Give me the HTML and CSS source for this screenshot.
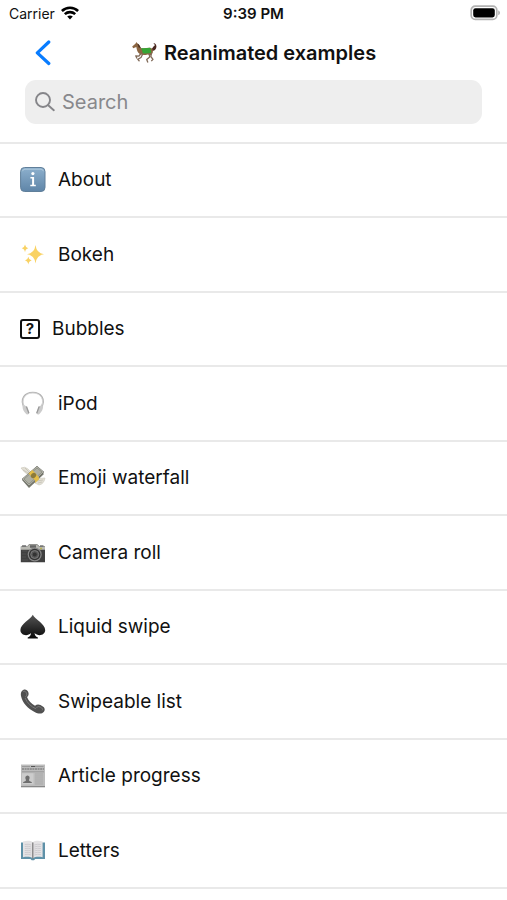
FILE: index.html
```html
<!DOCTYPE html>
<html lang="en">
<head>
<meta charset="utf-8">
<meta name="viewport" content="width=device-width, initial-scale=1">
<title>Reanimated examples</title>
<link rel="stylesheet" href="styles.css">
</head>
<body>
<div class="status">
  <div class="status-carrier">
    <span>Carrier</span>
    <svg width="18" height="14" viewBox="0 0 18 14" aria-hidden="true" fill="none" stroke="#000" stroke-width="2.6"><path d="M.9 5C5.4.7 12.600.7 17.100 5"/><path d="M3.800 8.100c3-2.700 7.400-2.700 10.400 0"/><path d="M6.200 10.500c1.700-1.500 3.900-1.500 5.600 0L9 13.400z" fill="#000" stroke="none"/></svg>
  </div>
  <span class="status-time">9:39 PM</span>
  <svg class="battery" width="32" height="16" viewBox="0 0 32 16" aria-hidden="true"><rect x="2.200" y="1.200" width="25.600" height="13.200" rx="4" fill="#fff" stroke="#b2b2b2" stroke-width="1.700"/><rect x="4.200" y="3.200" width="21.600" height="9.200" rx="2.300"/><path d="M29.200 5.500c2.400.7 2.400 4 0 4.700z" fill="#b2b2b2"/></svg>
</div>
<header class="header">
  <button class="back" type="button" aria-label="Back">
    <svg width="18" height="28" viewBox="0 0 18 28" fill="none" stroke="#087cff" stroke-width="3.200" stroke-linecap="round" stroke-linejoin="round"><path d="M15.800 3 4.300 13.800l11.500 10.700"/></svg>
  </button>
  <h1 class="title">
    <svg width="27" height="24" viewBox="0 0 27 24" aria-hidden="true">
      <path d="M20 8c2-.4 1.600-2.600 3.600-3.300.5-1.100-.6-1.700-1.200-2.700 2.500.4 3.600 2.400 2.800 5-.7 2.400-2.700 3.300-5 3z" fill="#4a2720"/>
      <path d="M1.200 5.600 4.400 2.700 5.500 1l.8 1.600c1.800.9 2.300 3 3.400 4.400 3.600.8 6.500-.5 10-.1 2.200.6 2.600 2.700 2 5l-2 2.300-3-.8c-2.800.8-5.500.7-7.500-.2C6.600 12.300 6 9.500 5.300 6.100L2.200 7.200z" fill="#8b6642"/>
      <path d="M6.300 2.200c2 1 2.700 3 3.700 4.700L7.600 6.400z" fill="#4c3021"/>
      <g fill="none" stroke="#806a58" stroke-width="1.300" stroke-linejoin="round"><path d="m10.500 12-2.800 3.200-3-.4L6 17.500"/><path d="m12 12.500-2 4-3.200 1.900 1.700 1.800"/><path d="m18 12 .7 4-3 2.500 1.200 3"/><path d="m20.500 12-.7 3.500 2.200 2.800-1.700 1.800"/></g>
      <path d="M10.300 6.900c3.200.7 5.900.1 9-.1l1 5c-3 .8-6 .9-8.500.5z" fill="#35a536"/>
    </svg>
    <span>Reanimated examples</span>
  </h1>
</header>
<form class="search" role="search">
  <label class="search-box">
    <svg width="20" height="20" viewBox="0 0 20 20" aria-hidden="true" fill="none" stroke="#858589" stroke-width="1.900" stroke-linecap="round"><circle cx="8" cy="8" r="7"/><path d="m13.200 13.200 5.600 5"/></svg>
    <input class="search-input" type="search" placeholder="Search" aria-label="Search">
  </label>
</form>
<main>
<ul class="list">
  <li><a class="row" href="#about">
    <svg class="icon" viewBox="0 0 26 26" aria-hidden="true"><defs><linearGradient id="info" x2="0" y2="1"><stop stop-color="#8db0cd"/><stop offset="1" stop-color="#5f85a8"/></linearGradient></defs><rect x=".6" y=".5" width="24.400" height="24" rx="4" fill="url(#info)" stroke="#607f9a" stroke-width="1"/><path d="M2.500 4.200q.5-2 2.500-2h16q2 0 2.300 2" fill="none" stroke="#afcadd"/><circle cx="12.900" cy="6.600" r="1.600" fill="#fff"/><path d="M10.400 10.100h3.700v7.700h1.700v1.500h-5.500v-1.500h1.800v-6.200h-1.700z" fill="#fff"/></svg>
    <span>About</span></a></li>
  <li><a class="row" href="#bokeh">
    <svg class="icon" viewBox="0 0 26 26" aria-hidden="true" fill="#f9d263"><path d="M15.500 3q1 8.200 8.500 9.300-7.500 1-8.500 9.200-1-8.200-8.500-9.200Q14.500 11.200 15.500 3z"/><path d="M5 2.500q.5 3.200 3.300 3.800Q5.500 6.900 5 10.300 4.500 6.900 1.700 6.300 4.500 5.700 5 2.500zM8.300 14.700q.5 3.200 3.400 3.900-2.900.6-3.400 4-.5-3.400-3.300-4 2.800-.7 3.300-3.900z"/></svg>
    <span>Bokeh</span></a></li>
  <li><a class="row" href="#bubbles">
    <span class="missing" aria-hidden="true">?</span>
    <span>Bubbles</span></a></li>
  <li><a class="row" href="#ipod">
    <svg class="icon" viewBox="0 0 26 26" aria-hidden="true"><path d="M4.300 16.500C-.3 7.500 5 1.500 12.800 1.500s13.100 6 8.500 15" fill="none" stroke="#b2b2b2" stroke-width="1.700"/><path d="M4.300 16.500C.5 8 5.500 2 12.800 2s12.300 6 8.500 14.500" fill="none" stroke="#e2e2e2" stroke-width=".7"/><path d="M2.500 15.300c2-1.700 4-.6 5 1.700l1.600 4.500c.4 1.600-1.500 2.700-2.900 1.500-2.300-2-3.700-4.600-3.700-7.700zM23.100 15.300c-2-1.700-4-.6-5 1.700l-1.600 4.500c-.4 1.600 1.500 2.700 2.900 1.500 2.300-2 3.700-4.600 3.700-7.700z" fill="#ccc"/><path d="m6.400 15.500 2.500 6.700m10.300-6.700-2.500 6.700" stroke="#999" stroke-width="1.300"/></svg>
    <span>iPod</span></a></li>
  <li><a class="row" href="#emoji-waterfall">
    <svg class="icon" viewBox="0 0 26 26" aria-hidden="true"><path d="M10 10Q5 9 1 3q4-2 7 1l3 3zM17 14q4-1 8-1-1 6-6 7l-4-2z" fill="#e2dfd5" stroke="#cbc7bb" stroke-width=".6"/><path d="m3 5 7 4M5 3l5 5m7 8 6-1m-5 3 4-1" stroke="#bbb7a9" stroke-width=".6"/><path d="m2 15 7 8L24 9l-7-7z" fill="#77796e"/><path d="m2 14 7 7L24 7l-7-6z" fill="#aeaf a4"/><path d="m2 14 7 7L24 7l-7-6z" fill="#aeafa4"/><path d="m4 14 5 5L22 7l-5-4z" fill="none" stroke="#85877c" stroke-width=".7"/><path d="m8.500 8.500 6.700 7-.2 2.500 4-3.600-.2-2.400-6.500-7z" fill="#e3bd48"/><ellipse cx="13.500" cy="10.500" rx="2.300" ry="3" transform="rotate(45 13.500 10.500)" fill="#8c7a3b"/></svg>
    <span>Emoji waterfall</span></a></li>
  <li><a class="row" href="#camera-roll">
    <svg class="icon" viewBox="0 0 26 26" aria-hidden="true"><path d="M.8 6.500 4 5.800 7.500 6l1.600-1.800h8l2 1.800H25v16.200H.8z" fill="#404040"/><path d="M1 6.300h6.500l1.800-1.700h7.600l1.900 1.700H25v3.500H1z" fill="#b8b8b2"/><path d="M2 5.300h4v1.800H2zm18-.1h3.500V7H20z" fill="#777"/><path d="M10 5.200h6v2.600h-6z" fill="#666"/><circle cx="14.700" cy="14.500" r="7" fill="#888"/><circle cx="14.700" cy="14.500" r="5.800" fill="#333"/><circle cx="14.700" cy="14.500" r="4" fill="#555" stroke="#888" stroke-width=".8"/><circle cx="14.700" cy="14.500" r="2" fill="#333"/><path d="M2 11h5M2 14h4M2 17h4M2 20h6" stroke="#5c5c5c" stroke-width=".6"/><circle cx="21" cy="8.600" r="1" fill="#b8b04a"/></svg>
    <span>Camera roll</span></a></li>
  <li><a class="row" href="#liquid-swipe">
    <svg class="icon" viewBox="0 0 26 26" aria-hidden="true"><defs><linearGradient id="spade" x2="0" y2="1"><stop stop-color="#555"/><stop offset="1" stop-color="#080808"/></linearGradient></defs><path d="M12.800.8C15 5.200 25.200 10.300 25.200 16c0 5.400-7 6.800-10.600 3.100.2 2.300 1 3.600 3.300 4.300v1.200H7.700v-1.200c2.300-.7 3.100-2 3.300-4.300C7.400 22.800.4 21.400.4 16 .4 10.300 10.600 5.200 12.800.8z" fill="url(#spade)"/></svg>
    <span>Liquid swipe</span></a></li>
  <li><a class="row" href="#swipeable-list">
    <svg class="icon" viewBox="0 0 26 26" aria-hidden="true"><path d="M3.200 1c2-1.200 4.200 0 5 2.100.8 2 .4 3.600-1.200 5 1.500 3.800 4.300 6.600 8 8.700 1.600-1.500 3.400-1.800 5.500-.8l2.700 1.800c1.800 1.300 1.900 3.200.7 4.900-2.100 2.600-5.600 2.200-9.300.3C7.700 19.400 2.500 13.900 1 7 .5 4.400 1.100 2.200 3.200 1z" fill="#505050"/><path d="M5.100 9c2 5 6 8.700 11 10.900" fill="none" stroke="#777"/><path d="M3.200 2.400c1.500-.8 2.900.5 3.400 2.200.4 1.500 0 2.500-1.200 3.200m11.100 11c1-1.400 2.300-1.500 3.800-.7 2 1 2.800 2.200 1.900 3.300" fill="none" stroke="#808080" stroke-width=".9"/></svg>
    <span>Swipeable list</span></a></li>
  <li><a class="row" href="#article-progress">
    <svg class="icon" viewBox="0 0 26 26" aria-hidden="true"><path d="M1 1.500h24V24H1z" fill="#bcbcbc"/><path d="M1 23h24v1.300H1z" fill="#888"/><path d="M2 3.500h8m5 0h8.500M2 8.800h22" stroke="#909090" stroke-width=".8"/><path d="M2 6h22" stroke="#929292" stroke-width="2.200" stroke-dasharray="2 .6"/><path d="M11 3.500h4" stroke="#555"/><path d="M2 10.300h11.500v11H2z" fill="#ccc"/><path d="M3 20c0-2 3-1 3-3-1-2-1-4 1.500-4.500 2.500.5 2.500 2.500 1.500 4.500 0 2 3 1 3 3z" fill="#6e6e6e"/><path d="M15 11h8m-8 2h8m-8 2h8m-8 2h8m-8 2h8m-8 2h8" stroke="#a4a4a4" stroke-width=".8"/></svg>
    <span>Article progress</span></a></li>
  <li><a class="row" href="#letters">
    <svg class="icon" viewBox="0 0 26 26" aria-hidden="true"><path d="M1 4.500h24V21h-9.800L14 22.300h-2.300L10.500 21H1z" fill="#5f91a8"/><path d="M3 3.500c4-1 7.500-1 9.800.8 2.300-1.800 5.800-1.800 9.800-.8v15.700c-4-.8-7.200-.6-9.800 1.100-2.600-1.700-5.800-1.900-9.800-1.100z" fill="#e4e2e4"/><path d="M12.800 4.500v16" stroke="#777" stroke-width="1.200"/><path d="M4.800 6.500q3.500-.7 6.500.5m-6.500 1.500q3.500-.7 6.500.5m-6.500 1.500q3.500-.7 6.500.5m-6.500 1.500q3.500-.7 6.500.5m-6.500 1.500q3.500-.7 6.500.5m-6.500 1.500q3.500-.7 6.500.5m9.500-10.500q-3.500-.7-6.500.5m6.500 1.500q-3.500-.7-6.500.5m6.500 1.500q-3.500-.7-6.500.5m6.500 1.500q-3.500-.7-6.500.5m6.500 1.500q-3.500-.7-6.500.5m6.500 1.500q-3.500-.7-6.500.5" fill="none" stroke="#c2c0c4" stroke-width=".7"/></svg>
    <span>Letters</span></a></li>
</ul>
</main>
</body>
</html>
```
FILE: styles.css
```css
* {
  box-sizing: border-box;
}

body {
  margin: 0;
  background: #fff;
  color: #111;
  font-family: Inter, "Liberation Sans", sans-serif;
}

svg {
  display: block;
  flex: none;
}

.status {
  display: grid;
  grid-template-columns: 1fr auto 1fr;
  align-items: center;
  height: 26px;
  padding: 0 6px;
  font-size: 14px;
}

.status-carrier {
  display: flex;
  align-items: center;
  gap: 6px;
  padding-left: 3px;
}

.status-time {
  font-size: 15px;
  font-weight: 600;
}

.battery {
  justify-self: end;
}

.header {
  display: grid;
  grid-template-columns: 40px 1fr 40px;
  align-items: center;
  height: 54px;
  padding: 0 22px;
}

.back {
  display: flex;
  justify-content: center;
  padding: 0;
  border: 0;
  background: none;
}

.title {
  display: flex;
  align-items: center;
  justify-content: center;
  gap: 6px;
  margin: 0;
  font-size: 20px;
  font-weight: 600;
  line-height: 24px;
}

.search {
  padding: 0 25px 18px;
}

.search-box {
  display: flex;
  align-items: center;
  gap: 7px;
  height: 44px;
  padding: 0 10px;
  border-radius: 11px;
  background: #eee;
}

.search-input {
  flex: 1;
  min-width: 0;
  padding: 0;
  border: 0;
  outline: 0;
  background: none;
  color: #111;
  font: inherit;
  font-size: 20px;
}

.search-input::placeholder {
  color: #88888c;
}

.list {
  margin: 0;
  padding: 0;
  border-top: 2px solid #e9e9e9;
  list-style: none;
}

.row {
  display: flex;
  align-items: center;
  gap: 12px;
  height: 74px;
  padding: 0 20px;
  border-bottom: 2px solid #e9e9e9;
  color: inherit;
  font-size: 19px;
  line-height: 24px;
  text-decoration: none;
}

li:nth-child(even) .row {
  height: 75px;
}

.icon {
  width: 26px;
  height: 26px;
}

.missing {
  width: 20px;
  height: 20px;
  border: 2px solid #111;
  border-radius: 3px;
  font-size: 15px;
  font-weight: 700;
  line-height: 16px;
  text-align: center;
}
```
